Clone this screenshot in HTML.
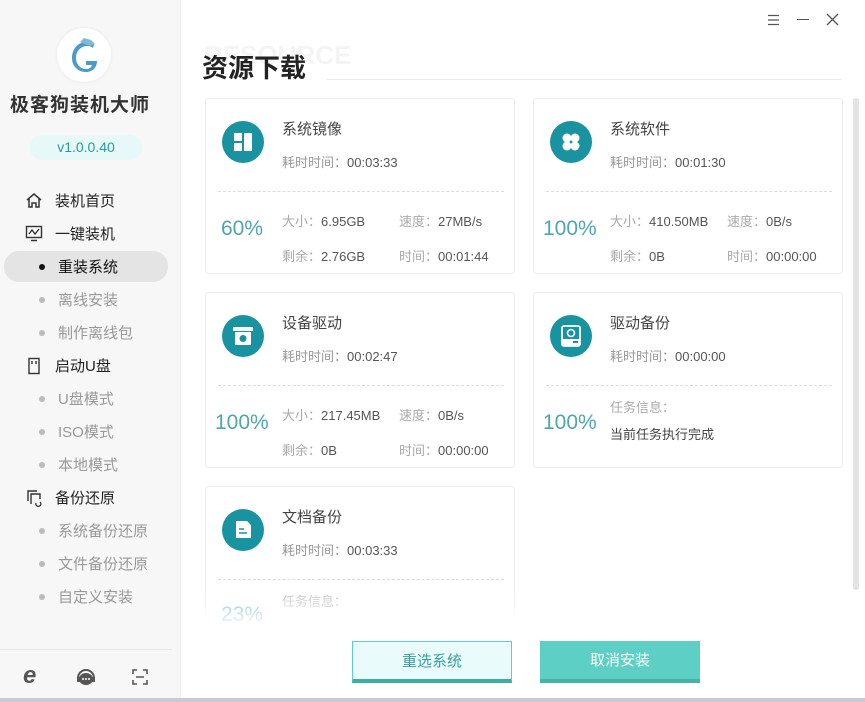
<!DOCTYPE html>
<html><head><meta charset="utf-8"><style>
*{margin:0;padding:0;box-sizing:border-box}
body{width:865px;height:702px;position:relative;overflow:hidden;background:#fff;font-family:"Liberation Sans","Noto Sans CJK SC",sans-serif;color:#333}
.a{position:absolute;white-space:nowrap}
#side{position:absolute;left:0;top:0;width:180px;height:702px;background:#f7f7f7}
.mi{position:absolute;left:55px;font-size:15px;color:#222}
.si{position:absolute;left:58px;font-size:15px;color:#999}
.dot{position:absolute;left:39px;width:6px;height:6px;border-radius:3px;background:#bbb}
.card{position:absolute;width:310px;height:176px;border:1px solid #ececec;border-radius:3px;background:#fff}
.ic{position:absolute;left:16px;top:22px;width:42px;height:42px;border-radius:21px;background:#1a93a0}
.ic svg{position:absolute;left:0;top:0}
.tt{position:absolute;left:76px;top:19px;font-size:15px;color:#444}
.tm{position:absolute;left:76px;top:53px;font-size:13px;color:#999}
.tm b{font-weight:normal;color:#555}
.hr{position:absolute;left:12px;right:10px;top:92px;border-top:1px dashed #ddd}
.pc{position:absolute;left:15px;top:118px;font-size:21px;color:#4fa6ab}
.s{position:absolute;font-size:13px;color:#aaa}
.s b{font-weight:normal;color:#555}
</style></head><body>
<div id="side">
 <div class="a" style="left:57px;top:28px;width:54px;height:54px;border-radius:27px;background:#fff;box-shadow:0 0 3px #e6e6e6"></div>
 <svg class="a" style="left:64px;top:34px" width="40" height="42" viewBox="0 0 40 42"><path d="M22 8 C14 8 8 15 8 24 C8 33 15 38 22 38 C29 38 33 33 33 27 L22 27 L22 31 L28 31 C27 34 25 35 22 35 C17 35 12 31 12 24 C12 17 17 12 23 12 C26 12 28 13 29 14 L30 10 C28 9 25 8 22 8Z" fill="#4a9bc9"/><path d="M16 8 L20 4 L27 6 L31 10 L26 12 Z" fill="#7fb8d8"/></svg>
 <div class="a" style="left:10px;top:90px;font-size:19px;font-weight:bold;letter-spacing:1px;color:#333">极客狗装机大师</div>
 <div class="a" style="left:30px;top:135px;width:112px;height:25px;border-radius:12px;background:#e6f8f8;text-align:center;line-height:25px;font-size:14px;color:#2a9a9a">v1.0.0.40</div>
 <svg class="a" style="left:25px;top:192px" width="18" height="17" viewBox="0 0 18 17"><path d="M2 8 L9 2 L16 8 M4 7 V15 H7 V11 H11 V15 H14 V7" fill="none" stroke="#333" stroke-width="1.5"/></svg>
 <div class="mi" style="top:190px">装机首页</div>
 <svg class="a" style="left:25px;top:225px" width="18" height="17" viewBox="0 0 18 17"><rect x="1.5" y="1.5" width="15" height="11" fill="none" stroke="#333" stroke-width="1.4"/><path d="M4 9 L7 5 L10 9 L14 4 M6 15.5 H12" fill="none" stroke="#333" stroke-width="1.4"/></svg>
 <div class="mi" style="top:223px">一键装机</div>
 <div class="a" style="left:4px;top:251px;width:164px;height:31px;border-radius:15px;background:#e4e4e4"></div>
 <div class="dot" style="background:#111;top:264px"></div><div class="si" style="top:256px;color:#111">重装系统</div>
 <div class="dot" style="top:297px"></div><div class="si" style="top:289px">离线安装</div>
 <div class="dot" style="top:330px"></div><div class="si" style="top:322px">制作离线包</div>
 <svg class="a" style="left:27px;top:357px" width="14" height="18" viewBox="0 0 14 18"><rect x="2" y="1.5" width="10" height="15" fill="none" stroke="#333" stroke-width="1.4"/><path d="M5 4 V7 M9 4 V7" stroke="#333" stroke-width="1.4"/></svg>
 <div class="mi" style="top:355px">启动U盘</div>
 <div class="dot" style="top:396px"></div><div class="si" style="top:388px">U盘模式</div>
 <div class="dot" style="top:429px"></div><div class="si" style="top:421px">ISO模式</div>
 <div class="dot" style="top:462px"></div><div class="si" style="top:454px">本地模式</div>
 <svg class="a" style="left:25px;top:489px" width="18" height="18" viewBox="0 0 18 18"><path d="M3 12 V2 H12 M6 15 V5 H15 V10" fill="none" stroke="#333" stroke-width="1.4"/><path d="M11 14 A2.5 2.5 0 1 0 15 13" fill="none" stroke="#333" stroke-width="1.3"/></svg>
 <div class="mi" style="top:487px">备份还原</div>
 <div class="dot" style="top:528px"></div><div class="si" style="top:520px">系统备份还原</div>
 <div class="dot" style="top:561px"></div><div class="si" style="top:553px">文件备份还原</div>
 <div class="dot" style="top:594px"></div><div class="si" style="top:586px">自定义安装</div>
 <div class="a" style="left:0;top:649px;width:172px;border-top:1px solid #e8e8e8"></div>
 <div class="a" style="left:23px;top:662px;font-size:24px;font-weight:bold;font-style:italic;color:#555">e</div>
 <svg class="a" style="left:75px;top:667px" width="22" height="20" viewBox="0 0 22 20"><path d="M3 11 A8 8 0 0 1 19 11" fill="none" stroke="#555" stroke-width="2"/><ellipse cx="11" cy="12" rx="7" ry="6" fill="#555"/><circle cx="8" cy="12" r="1" fill="#fff"/><circle cx="11" cy="12" r="1" fill="#fff"/><circle cx="14" cy="12" r="1" fill="#fff"/><rect x="2" y="10" width="3" height="5" fill="#555"/><rect x="17" y="10" width="3" height="5" fill="#555"/></svg>
 <svg class="a" style="left:132px;top:669px" width="16" height="16" viewBox="0 0 16 16"><path d="M1 5 V1 H5 M11 1 H15 V5 M15 11 V15 H11 M5 15 H1 V11 M4 8 H12" fill="none" stroke="#555" stroke-width="1.6"/></svg>
</div>
<div class="a" style="left:180px;top:0;width:1px;height:702px;background:#f0f0f0"></div>
<!-- window controls -->
<svg class="a" style="left:767px;top:14px" width="13" height="12"><path d="M1 1.5 H12 M1 6 H12 M1 10.5 H12" stroke="#555" stroke-width="1.2"/></svg>
<div class="a" style="left:797px;top:19px;width:12px;border-top:1.5px solid #555"></div>
<svg class="a" style="left:826px;top:13px" width="13" height="13"><path d="M1 1 L12 12 M12 1 L1 12" stroke="#555" stroke-width="1.3"/></svg>
<div class="a" style="left:204px;top:40px;font-size:26px;font-weight:bold;color:#f4f4f4">RESOURCE</div>
<div class="a" style="left:202px;top:48px;font-size:26px;font-weight:bold;color:#222">资源下载</div>
<div class="a" style="left:327px;top:79px;width:514px;border-top:1px solid #ececec"></div>
<div class="a" style="left:853px;top:98px;width:6px;height:492px;border-radius:3px;background:#e3e3e3"></div>

<div class="card" style="left:205px;top:98px">
 <div class="ic"><svg width="42" height="42"><rect x="12" y="12" width="8" height="8" fill="#fff"/><rect x="22" y="12" width="8" height="18" fill="#fff"/><rect x="12" y="22" width="8" height="8" fill="#fff"/></svg></div>
 <div class="tt">系统镜像</div><div class="tm">耗时时间：<b>00:03:33</b></div><div class="hr"></div>
 <div class="pc">60%</div>
 <div class="s" style="left:76px;top:112px">大小：<b>6.95GB</b></div><div class="s" style="left:193px;top:112px">速度：<b>27MB/s</b></div>
 <div class="s" style="left:76px;top:147px">剩余：<b>2.76GB</b></div><div class="s" style="left:193px;top:147px">时间：<b>00:01:44</b></div>
</div>
<div class="card" style="left:533px;top:98px">
 <div class="ic"><svg width="42" height="42"><circle cx="17" cy="17" r="4.5" fill="#fff"/><circle cx="25" cy="17" r="4.5" fill="#fff"/><circle cx="17" cy="25" r="4.5" fill="#fff"/><circle cx="25" cy="25" r="4.5" fill="#fff"/></svg></div>
 <div class="tt">系统软件</div><div class="tm">耗时时间：<b>00:01:30</b></div><div class="hr"></div>
 <div class="pc" style="left:9px">100%</div>
 <div class="s" style="left:76px;top:112px">大小：<b>410.50MB</b></div><div class="s" style="left:193px;top:112px">速度：<b>0B/s</b></div>
 <div class="s" style="left:76px;top:147px">剩余：<b>0B</b></div><div class="s" style="left:193px;top:147px">时间：<b>00:00:00</b></div>
</div>
<div class="card" style="left:205px;top:292px">
 <div class="ic"><svg width="42" height="42"><rect x="11" y="12" width="20" height="4" fill="#fff"/><rect x="13" y="17" width="16" height="13" fill="#fff"/><circle cx="21" cy="23.5" r="3.5" fill="#1a93a0"/></svg></div>
 <div class="tt">设备驱动</div><div class="tm">耗时时间：<b>00:02:47</b></div><div class="hr"></div>
 <div class="pc" style="left:9px">100%</div>
 <div class="s" style="left:76px;top:112px">大小：<b>217.45MB</b></div><div class="s" style="left:193px;top:112px">速度：<b>0B/s</b></div>
 <div class="s" style="left:76px;top:147px">剩余：<b>0B</b></div><div class="s" style="left:193px;top:147px">时间：<b>00:00:00</b></div>
</div>
<div class="card" style="left:533px;top:292px">
 <div class="ic"><svg width="42" height="42"><rect x="12" y="11" width="18" height="20" rx="2" fill="none" stroke="#fff" stroke-width="1.8"/><circle cx="21" cy="18" r="3.5" fill="none" stroke="#fff" stroke-width="1.6"/><rect x="12" y="24" width="18" height="7" fill="#fff"/><rect x="23" y="26" width="5" height="2" fill="#1a93a0"/></svg></div>
 <div class="tt">驱动备份</div><div class="tm">耗时时间：<b>00:00:00</b></div><div class="hr"></div>
 <div class="pc" style="left:9px">100%</div>
 <div class="s" style="left:76px;top:104px">任务信息：</div>
 <div class="s" style="left:76px;top:131px;color:#444">当前任务执行完成</div>
</div>
<div class="card" style="left:205px;top:486px;height:176px">
 <div class="ic"><svg width="42" height="42"><path d="M14 12 H25 L29 16 V29 H14 Z" fill="#fff"/><path d="M17 20 H22 M17 24 H25" stroke="#1a93a0" stroke-width="1.5"/></svg></div>
 <div class="tt">文档备份</div><div class="tm">耗时时间：<b>00:03:33</b></div><div class="hr"></div>
 <div class="pc" style="left:15px;top:116px">23%</div>
 <div class="s" style="left:76px;top:104px">任务信息：</div>
</div>
<div class="a" style="left:182px;top:590px;width:670px;height:40px;background:linear-gradient(rgba(255,255,255,0.3),#fff)"></div>
<div class="a" style="left:182px;top:624px;width:670px;height:75px;background:#fff"></div>
<div class="a" style="left:352px;top:641px;width:160px;height:42px;background:#e9fbfb;border:1px solid #5ccfc3;border-bottom:4px solid #3cafa3;text-align:center;line-height:40px;font-size:15px;color:#3a9fa0">重选系统</div>
<div class="a" style="left:540px;top:641px;width:160px;height:42px;background:#5dcfc4;border-bottom:4px solid #45b3a8;text-align:center;line-height:40px;font-size:15px;color:#fff">取消安装</div>
<div class="a" style="left:0;top:698px;width:865px;height:4px;background:#c5ccd6"></div>
</body></html>
